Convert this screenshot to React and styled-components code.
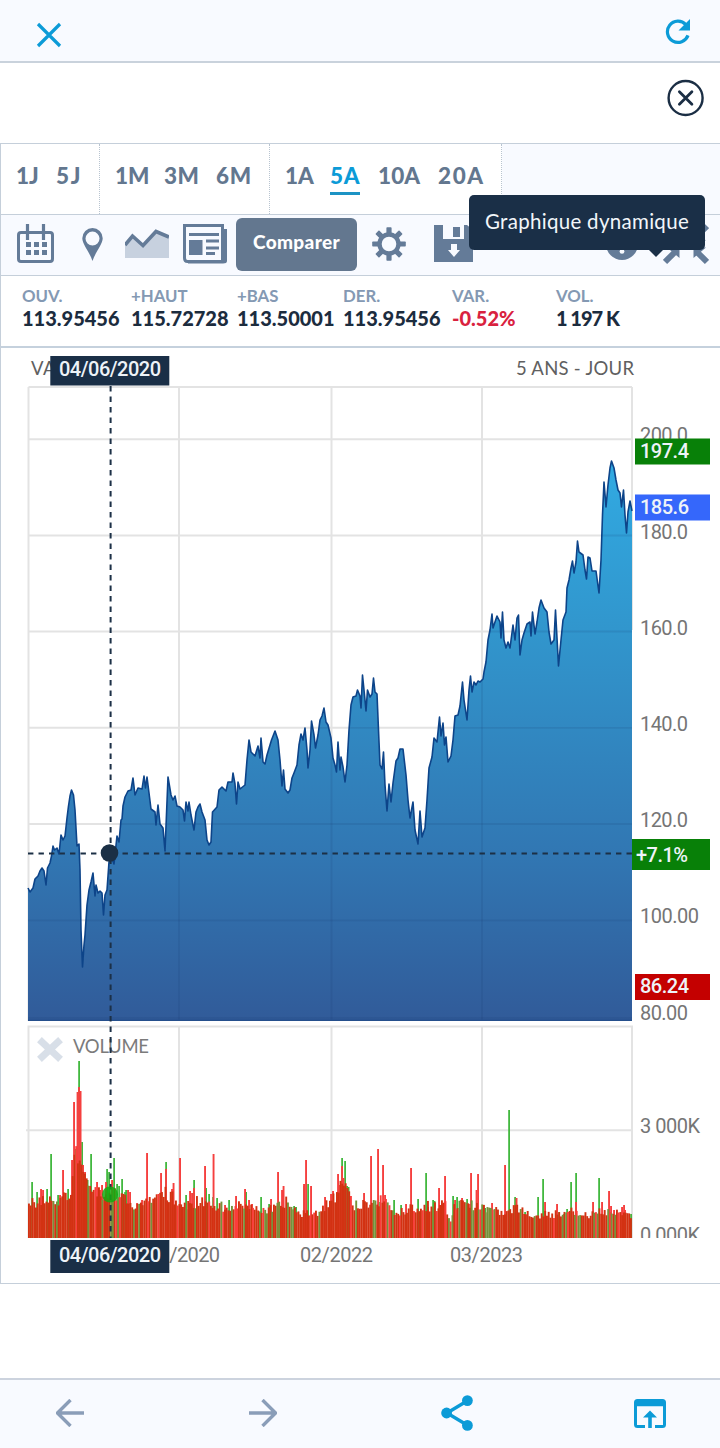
import React from "react";
import styled, { createGlobalStyle, css } from "styled-components";

const RANGES = [
  { width: 99, pad: 15, items: [["1J", 40], ["5J", 30, 1.6]] },
  { width: 170, pad: 15, items: [["1M", 49], ["3M", 52, 0.4], ["6M", 40, 0.8]] },
  { width: 232, pad: 15, items: [["1A", 45], ["5A", 48, 0.7], ["10A", 60, 0.1], ["20A", 50, 1.6]] },
];

const STATS = [
  { label: "OUV.", value: "113.95456" },
  { label: "+HAUT", value: "115.72728" },
  { label: "+BAS", value: "113.50001" },
  { label: "DER.", value: "113.95456" },
  { label: "VAR.", value: "-0.52%", down: true },
  { label: "VOL.", value: "1 197 K", spacing: -1 },
];

// price curve, [x, y]
const PRICE = [
  28,888, 30,892, 33,888, 35,879, 38,876, 40,871, 42,868, 44,871, 46,885, 47.5,868, 50,863, 51.5,856, 53,846,
  54.5,850, 57,848, 59,854, 61,835, 63,840, 65,836, 67,818, 68.5,806, 70,796, 71.5,790, 73.5,795, 75,810, 77,846,
  79,844, 80,870, 81,930, 82.5,967, 84,945, 85,935, 87,905, 89,890, 91,882, 93,873, 95,896, 96,885, 98,893, 100,891,
  102,893, 103.5,915, 105,895, 107,890, 109,862, 112,858, 114,864, 117,836, 119,842, 121,820, 122,819, 123,806,
  125,797, 128,791, 131,790, 133,778, 135,795, 138,788, 142,789, 144,776, 145.5,788, 147,777, 149,793, 151,809,
  155,812, 156,825, 158,805, 160,824, 163,828, 165,851, 168,777, 171,795, 173,800, 175,796, 177,806, 180,807,
  183,810, 184.5,821, 186,802, 188,811, 189,802, 191,815, 194,830, 196,812, 198,807, 200,804, 202,812, 205,820,
  207,840, 209,845, 211,842, 212.5,812, 217,807, 219,790, 222,787, 226,791, 228,782, 232,782, 233,773, 235,784,
  236.5,804, 238,782, 240,789, 245,785, 247,760, 249,740, 251,752, 255,756, 258,746, 260,758, 261,738, 263,762,
  265,764, 267,755, 270,745, 271.5,740, 275,731, 278,740, 280,760, 282,786, 283.5,770, 285,789, 288,793, 290,790,
  292,778, 294,773, 297,765, 299,745, 301,734, 303,740, 305,728, 307,750, 308,768, 310,750, 311.5,721, 314,735,
  315.5,748, 318,735, 320,720, 322,716, 324,708, 326,722, 328,725, 331,738, 333,758, 335,765, 336.5,772, 338,742,
  340,770, 341,757, 343,767, 345,782, 347,765, 349,730, 351,705, 353,697, 356,696, 357.5,690, 360,696, 361,708,
  362.5,675, 365,700, 366,711, 367.5,690, 370,697, 372,694, 373.5,678, 375,692, 377,694, 378.5,730, 380,765,
  382,769, 383.5,752, 385,785, 387,811, 389,784, 391,802, 393,783, 396,761, 398,758, 400,749, 403,749, 406,775,
  408,800, 410,818, 413,802, 415,830, 418,844, 420,811, 422,837, 425,828, 427,800, 429,768, 432,757, 434,738,
  437,742, 439.5,717, 441,736, 443,723, 444.5,745, 446,737, 448,762, 451,756, 453,740, 455,716, 458,715, 460,706,
  462.5,682, 464,700, 467,720, 469,690, 470.5,676, 472,692, 474,682, 476,685, 478,681, 480,682, 483,679, 484,672,
  486,662, 488,640, 490,630, 492,614, 493,628, 495,622, 497,616, 500,622, 501,638, 502.5,612, 504,640, 506,648,
  508,642, 510,648, 513,625, 515,640, 517,618, 518.5,615, 520,655, 522,640, 524,633, 527,624, 530,622, 531,636,
  532.5,612, 535,634, 537,622, 539,608, 541,600, 544,608, 547,612, 549,632, 551,644, 554,640, 555.5,610, 557,638,
  558.5,666, 561,640, 563,620, 566,612, 567,588, 569,580, 571,568, 572.5,561, 574,573, 576,562, 577.5,541,
  579,552, 583,555, 585,570, 586.5,579, 588,557, 590,558, 592,571, 596,571, 599,593, 601,560, 602.5,515, 604,482,
  606,507, 608,485, 610,468, 611.5,461, 614,468, 616,480, 618,490, 620,493, 621.5,507, 623.5,490, 625,515,
  626.5,533, 628,512, 630,501, 632,511,
];

const pairs = (list) => {
  const out = [];
  for (let i = 0; i < list.length; i += 2) out.push([list[i], list[i + 1]]);
  return out;
};

const linePath = "M" + pairs(PRICE).map((p) => p.join(" ")).join("L");
const areaPath = `${linePath}L632 1021L28 1021Z`;

const UP_PEAKS = pairs([
  32,1182, 37,1192, 47,1189, 51,1154, 58,1195, 68,1189, 75,1149, 79,1061, 82,1142, 87.5,1180, 91,1154, 107,1169,
  109,1172, 114,1158, 117,1184, 119,1186, 122,1179, 125,1192, 126,1190, 166,1162, 186,1195, 194,1180, 206,1188,
  209,1194, 213,1197, 217,1198, 229,1200, 246,1192, 261,1197, 269,1204, 304,1186, 308,1184, 294,1206, 296,1207,
  342,1158, 345,1161, 347,1186, 348.5,1187, 350,1201, 380,1202, 394,1200, 401,1205, 418,1199, 426,1173, 433,1200,
  434.5,1201, 453,1196, 457,1197, 467,1199, 482,1209, 485,1208, 509,1110, 515,1197, 525,1212, 538,1197, 543,1179,
  559,1212, 564,1214, 567,1209, 571,1182, 576,1173, 599,1178, 610,1212, 631,1214,
]);

const DOWN_PEAKS = pairs([
  41,1189, 43,1190, 60,1195, 63,1170, 72,1160, 74,1102, 77.5,1092, 79,1087, 80.5,1091, 83,1165, 85,1172, 97,1182,
  100,1190, 102,1185, 106,1182, 112,1180, 128,1190, 130,1192, 137,1203, 142,1200, 147,1153, 161,1173, 166,1169,
  172,1189, 173.5,1183, 180,1158, 190,1191, 192,1193, 194,1188, 205,1166, 213.5,1154, 225,1205, 236,1196,
  245,1189, 249,1200, 252,1204, 271,1199, 278,1172, 282,1190, 283.5,1186, 304,1184, 306,1160, 311,1186, 325,1197,
  331,1194, 333,1191, 338,1174, 340,1185, 342,1166, 343.5,1178, 364,1193, 371,1156, 378,1149, 383,1165, 385,1195,
  406,1204, 411,1168, 428,1207, 439,1188, 441,1205, 443,1204, 445,1176, 455,1200, 462,1198, 470,1204, 471,1173,
  476.5,1190, 478,1174, 492,1203, 505,1165, 516.5,1198, 545,1202, 557,1204, 576,1202, 593,1202, 602,1202, 609,1191,
  611,1206, 614,1210, 622,1207, 624,1205, 625,1210,
]);

// typical height of the daily bars along the axis
const LEVELS = [[28, 33], [60, 38], [70, 45], [75, 80], [83, 70], [90, 46], [125, 39], [135, 28], [165, 43], [182, 31], [200, 36], [225, 29], [250, 33], [265, 25], [285, 35], [297, 23], [318, 25], [335, 40], [344, 58], [352, 32], [380, 37], [396, 25], [420, 30], [445, 32], [449, 16], [453, 31], [475, 32], [500, 24], [515, 28], [532, 21], [570, 25], [590, 21], [600, 27], [632, 20]];

const levelAt = (x) => {
  let i = 1;
  while (i < LEVELS.length - 1 && LEVELS[i][0] < x) i += 1;
  const [x0, h0] = LEVELS[i - 1];
  const [x1, h1] = LEVELS[i];
  return h0 + ((h1 - h0) * (x - x0)) / (x1 - x0);
};

const noise = (n) => {
  const v = Math.sin(n * 91.7 + 13.1) * 4371.3;
  return v - Math.floor(v);
};

const DAILY = Array.from({ length: 345 }, (_, i) => {
  const x = 28 + i * 1.75;
  const greenZone = (x > 110 && x < 126) || (x > 480 && x < 496) || (x > 556 && x < 580);
  const n = noise(i + 400);
  const kind = n < (greenZone ? 0.42 : 0.13) ? "up" : n > 0.88 ? "down" : "mixed";
  return { x, h: levelAt(x) * (0.86 + noise(i) * 0.36), kind };
});

const BAR_FILL = { up: "#76913a", down: "#fb3d3b", mixed: "#d23212" };

const CloseIcon = () => (
  <svg width="26" height="26" viewBox="0 0 26 26" fill="none" stroke="#0c9bd7" strokeWidth="3.2">
    <path d="M2 2L24 24M24 2L2 24" />
  </svg>
);

const ReloadIcon = () => (
  <svg width="26" height="26" viewBox="0 0 26 26">
    <path d="M23 16.4A10.6 10.6 0 1 1 20.8 5.6" fill="none" stroke="#0c9bd7" strokeWidth="3.2" />
    <path d="M25 0V11.5H13.5Z" fill="#0c9bd7" />
  </svg>
);

const CircleCloseIcon = () => (
  <svg width="38" height="38" viewBox="0 0 38 38" fill="none" stroke="#1b2e44">
    <circle cx="18.6" cy="19" r="17" strokeWidth="2.4" />
    <path d="M12.4 12.7L24.9 25.2M24.9 12.7L12.4 25.2" strokeWidth="2.8" strokeLinecap="round" />
  </svg>
);

const CalendarIcon = () => (
  <svg width="37" height="40" viewBox="0 0 37 40">
    <rect x="1.5" y="8.5" width="34" height="29" rx="2.5" fill="none" stroke="#647b98" strokeWidth="3" />
    <path d="M10.5 0V16M26.5 0V16" stroke="#647b98" strokeWidth="3.2" />
    {[9, 17, 25].map((x) =>
      [18, 26].map((y) => <rect key={`${x}-${y}`} x={x} y={y} width="5" height="5" fill="#647b98" />)
    )}
  </svg>
);

const PinIcon = () => (
  <svg width="21" height="33" viewBox="0 0 21 33">
    <path
      d="M10.5 0A10.2 10.2 0 0 0 .3 10.2C.3 16 7 23 10.5 33C14 23 20.7 16 20.7 10.2A10.2 10.2 0 0 0 10.5 0ZM10.5 3.6A7 7 0 1 1 10.5 17.6A7 7 0 1 1 10.5 3.6Z"
      fill="#647b98"
      fillRule="evenodd"
    />
  </svg>
);

const AreaIcon = () => (
  <svg width="44" height="30" viewBox="0 0 44 30">
    <path d="M0 15L8 6.5L18 16L31 3L44 8V29H0Z" fill="#c7d1df" />
    <path d="M0 16L7.5 7L18 16.5L31 2.5L44 8" fill="none" stroke="#647b98" strokeWidth="3.6" />
  </svg>
);

const NewsIcon = () => (
  <svg width="44" height="40" viewBox="0 0 44 40">
    <path d="M39 5H44V37Q44 39.5 40 39.5H5V37H39Z" fill="#647b98" />
    <path d="M1.5 1.5H39.5V37.5H4.5Q1.5 37.5 1.5 34Z" fill="#f8faff" stroke="#647b98" strokeWidth="3" />
    <path d="M6 10.5H36M23 17H36M23 24H36M23 29.5H32" stroke="#647b98" strokeWidth="3" />
    <rect x="6" y="16" width="13.5" height="15" fill="#647b98" />
  </svg>
);

const GearIcon = () => (
  <svg width="34" height="34" viewBox="-17 -17 34 34">
    {[0, 45, 90, 135, 180, 225, 270, 315].map((a) => (
      <rect key={a} x="-2.6" y="-16.8" width="5.2" height="8" rx=".8" fill="#647b98" transform={`rotate(${a})`} />
    ))}
    <circle r="9.5" fill="none" stroke="#647b98" strokeWidth="4.4" />
  </svg>
);

const SaveIcon = () => (
  <svg width="39" height="38" viewBox="0 0 39 38">
    <path d="M0 0H9V14H30V0H33L39 5V37H0Z" fill="#647b98" />
    <rect x="19" y="2" width="7" height="10" fill="#647b98" />
    <path d="M17 19H23V25H26L20 32L14 25H17Z" fill="#f8faff" />
  </svg>
);

const InfoIcon = () => (
  <svg width="32" height="32" viewBox="0 0 32 32">
    <circle cx="16" cy="16" r="16" fill="#647b98" />
    <path d="M11 10Q12 6 16 6Q21 6 21 11Q21 14 16 17" fill="none" stroke="#f8faff" strokeWidth="3" />
    <circle cx="16" cy="23.4" r="2.4" fill="#f8faff" />
  </svg>
);

const ShrinkIcon = () => (
  <svg width="46" height="42" viewBox="0 0 46 42">
    <g fill="none" stroke="#647b98" strokeWidth="6">
      <path d="M2 39L13 28M44 39L33 28M2 3L13 14M44 3L33 14" />
    </g>
    <path d="M4 24.5H16.5V35ZM43 24.5H30.5V35ZM4 17.5H16.5V7ZM43 17.5H30.5V7Z" fill="#647b98" />
  </svg>
);

const ArrowIcon = ({ flip }) => (
  <svg width="28" height="28" viewBox="0 0 28 28" fill="none" stroke="#8a9db8" strokeWidth="3.4">
    <path d={flip ? "M0 14H26M13.5 1L26.5 14L13.5 27" : "M28 14H2M14.5 1L1.5 14L14.5 27"} />
  </svg>
);

const ShareIcon = () => (
  <svg width="32" height="36" viewBox="0 0 32 36">
    <path d="M26 6L6 18L26 30" fill="none" stroke="#0c9bd7" strokeWidth="3.4" />
    <circle cx="26.4" cy="5.6" r="5.4" fill="#0c9bd7" />
    <circle cx="5.6" cy="18" r="5.4" fill="#0c9bd7" />
    <circle cx="26.4" cy="30.4" r="5.4" fill="#0c9bd7" />
  </svg>
);

const OpenIcon = () => (
  <svg width="32" height="29" viewBox="0 0 32 29" fill="#0c9bd7">
    <path d="M3.5 0H28.5Q32 0 32 3.5V25.5Q32 29 28.5 29H21V26H29V7.2H3V26H11V29H3.5Q0 29 0 25.5V3.5Q0 0 3.5 0Z" />
    <path d="M16 11.5L23 18.5H17.8V29H14.2V18.5H9Z" />
  </svg>
);

const Tag = ({ x, y, w, h, fill, tx, ty, children, fit }) => (
  <g>
    <rect x={x} y={y} width={w} height={h} fill={fill} />
    <ChartText x={tx} y={ty} $color="#eef3f8" $strong textLength={fit}>
      {children}
    </ChartText>
  </g>
);

const StockChart = () => (
  <ChartSvg viewBox="1 348 719 935">
    <defs>
      <linearGradient id="priceFill" gradientUnits="userSpaceOnUse" x1="0" y1="461" x2="0" y2="1021">
        <stop offset="0" stopColor="#31aae2" />
        <stop offset=".3" stopColor="#3196cd" />
        <stop offset=".7" stopColor="#3177b3" />
        <stop offset="1" stopColor="#315b99" />
      </linearGradient>
      <clipPath id="priceClip">
        <path d={areaPath} />
      </clipPath>
      <clipPath id="volumeClip">
        <rect x="0" y="1026" width="720" height="212" />
      </clipPath>
    </defs>

    <Label x="31" y="375" textLength="46">VALE</Label>
    <Label x="516" y="375" textLength="118">5 ANS - JOUR</Label>

    <Grid>
      <path d="M28.5 387H632M28.5 387V1021M632 387V630M179 387V1021M331.5 387V1021M482 387V1021" />
      <path d="M28 439.3H632M28 535.5H632M28 631.5H632M28 727.8H632M28 824H632M28 920.3H632" />
      <path d="M28.5 1238V1026.5H632V1238M179 1026V1238M331.5 1026V1238M482 1026V1238M26 1130.3H632" />
    </Grid>
    <path d={areaPath} fill="url(#priceFill)" />
    <g clipPath="url(#priceClip)" fill="none" stroke="#14356b" strokeOpacity=".13" strokeWidth="1.8">
      <path d="M179 387V1021M331.5 387V1021M482 387V1021" />
      <path d="M28 535.5H632M28 631.5H632M28 727.8H632M28 824H632M28 920.3H632M28 1018H632" />
    </g>
    <path d={linePath} fill="none" stroke="#0d4489" strokeWidth="1.6" strokeLinejoin="round" />
    <path d="M28 1020.3H632" stroke="#254f8c" strokeWidth="1.4" />

    <ChartText x="640" y="441.5" textLength="48">200.0</ChartText>
    <ChartText x="640" y="538.5" textLength="48">180.0</ChartText>
    <ChartText x="640" y="634.5" textLength="48">160.0</ChartText>
    <ChartText x="640" y="730.5" textLength="48">140.0</ChartText>
    <ChartText x="640" y="826.5" textLength="48">120.0</ChartText>
    <ChartText x="640" y="922.5" textLength="59">100.00</ChartText>
    <ChartText x="640" y="1019.5" textLength="48">80.00</ChartText>

    <path d="M42 1042L58 1057M58 1042L42 1057" stroke="#d8dfe8" strokeWidth="7" strokeLinecap="square" />
    <Label x="73" y="1053" textLength="76" $soft>VOLUME</Label>

    {UP_PEAKS.map(([x, y]) => (
      <rect key={`u${x}`} x={x - 0.8} y={y} width="1.8" height={1238 - y} fill="#42b83f" />
    ))}
    {DOWN_PEAKS.map(([x, y]) => (
      <rect key={`d${x}`} x={x - 0.9} y={y} width="1.9" height={1238 - y} fill="#f5403f" />
    ))}
    {DAILY.map((b) => (
      <rect key={b.x} x={b.x} y={1238 - b.h} width={b.x > 630 ? 1.5 : 1.9} height={b.h} fill={BAR_FILL[b.kind]} />
    ))}

    <g clipPath="url(#volumeClip)">
      <ChartText x="640" y="1132.5" textLength="60">3 000K</ChartText>
      <ChartText x="640" y="1241.5" textLength="60">0 000K</ChartText>
    </g>

    <ChartText x="148" y="1262" textLength="72">11/2020</ChartText>
    <ChartText x="300" y="1262" textLength="73">02/2022</ChartText>
    <ChartText x="450" y="1262" textLength="73">03/2023</ChartText>

    <path d="M110.6 386V1238" stroke="#1c3046" strokeWidth="2" strokeDasharray="5.4 5.1" />
    <path d="M28 853.5H632" stroke="#1c3046" strokeWidth="1.8" strokeDasharray="5.4 5.1" />
    <circle cx="109.5" cy="853" r="8.8" fill="#1a2f45" />
    <circle cx="110" cy="1194.5" r="8" fill="#10ab10" opacity=".85" />

    <Tag x={635} y={438.5} w={75} h={26} fill="#088008" tx={640} ty={457.5} fit={49}>197.4</Tag>
    <Tag x={635} y={494.5} w={75} h={26} fill="#3567fb" tx={640} ty={513.5} fit={49}>185.6</Tag>
    <Tag x={632} y={839} w={78} h={31} fill="#088008" tx={636} ty={861.5} fit={52}>+7.1%</Tag>
    <Tag x={635} y={974} w={75} h={26} fill="#c40000" tx={640} ty={993} fit={49}>86.24</Tag>
    <Tag x={50.3} y={356} w={119} h={29.5} fill="#1a2f47" tx={59} ty={375.5} fit={102}>04/06/2020</Tag>
    <Tag x={50.3} y={1240} w={119} h={33} fill="#1a2f47" tx={59} ty={1262} fit={102}>04/06/2020</Tag>
  </ChartSvg>
);

const App = () => {
  return (
    <Page>
      <GlobalStyle />
      <TopBar>
        <CloseIcon />
        <ReloadIcon />
      </TopBar>
      <DismissRow>
        <CircleCloseIcon />
      </DismissRow>
      <Panel>
        <RangeRow>
          {RANGES.map((group) => (
            <RangeGroup key={group.width} $width={group.width} $pad={group.pad}>
              {group.items.map(([name, width, spacing]) => (
                <RangeItem key={name} $width={width}>
                  <RangeName $active={name === "5A"} $spacing={spacing}>{name}</RangeName>
                </RangeItem>
              ))}
            </RangeGroup>
          ))}
        </RangeRow>
        <Tools>
          <Tool $left={16}><CalendarIcon /></Tool>
          <Tool $left={28}><PinIcon /></Tool>
          <Tool $left={22}><AreaIcon /></Tool>
          <Tool $left={14}><NewsIcon /></Tool>
          <CompareButton>Comparer</CompareButton>
          <Tool $left={15}><GearIcon /></Tool>
          <Tool $left={28}><SaveIcon /></Tool>
          <Tool $left={133}><InfoIcon /></Tool>
          <Tool $left={25}><ShrinkIcon /></Tool>
          <Tooltip>Graphique dynamique</Tooltip>
        </Tools>
        <Stats>
          {STATS.map((s) => (
            <Stat key={s.label}>
              <StatLabel>{s.label}</StatLabel>
              <StatValue $down={s.down} $spacing={s.spacing}>{s.value}</StatValue>
            </Stat>
          ))}
        </Stats>
        <StockChart />
      </Panel>
      <BottomBar>
        <NavItem><ArrowIcon /></NavItem>
        <NavItem><ArrowIcon flip /></NavItem>
        <NavItem><ShareIcon /></NavItem>
        <NavItem><OpenIcon /></NavItem>
      </BottomBar>
    </Page>
  );
};

const GlobalStyle = createGlobalStyle`
  * {
    box-sizing: border-box;
  }

  body {
    margin: 0;
    background: #fff;
    font-family: Lato, "Open Sans", sans-serif;
  }

  svg {
    display: block;
    flex: none;
  }
`;

const Page = styled.div`
  width: 720px;
  height: 1448px;
  display: flex;
  flex-direction: column;
  overflow: hidden;
`;

const TopBar = styled.header`
  height: 63px;
  display: flex;
  justify-content: space-between;
  padding: 22px 29px 0 36px;
  background: #f8faff;
  border-bottom: 2px solid #c9d2dc;

  svg:last-child {
    margin-top: -3px;
  }
`;

const DismissRow = styled.div`
  height: 80px;
  display: flex;
  justify-content: flex-end;
  padding: 16px 15px 0;
`;

const Panel = styled.main`
  height: 1141px;
  border: 1px solid #c5cfda;
  border-right: 0;
`;

const RangeRow = styled.div`
  height: 71px;
  display: flex;
  background: #f8faff;
  border-bottom: 1px solid #c5cfda;
`;

const RangeGroup = styled.div`
  width: ${(p) => p.$width}px;
  display: flex;
  padding: 18px 0 0 ${(p) => p.$pad}px;
  background: #fff;
  border-right: 1px dotted #b8c4d0;
`;

const RangeItem = styled.div`
  width: ${(p) => p.$width}px;
`;

const RangeName = styled.span`
  display: inline-block;
  height: 33px;
  font-size: 22.5px;
  line-height: 27px;
  font-weight: 900;
  letter-spacing: ${(p) => p.$spacing || 0}px;
  color: #63778f;
  white-space: nowrap;

  ${(p) =>
    p.$active &&
    css`
      color: #0c9bd7;
      border-bottom: 3px solid #1c93c4;
    `}
`;

const Tools = styled.div`
  height: 61px;
  display: flex;
  align-items: center;
  position: relative;
  padding-bottom: 2px;
  background: #f8faff;
  border-bottom: 1px solid #c5cfda;
`;

const Tool = styled.div`
  margin-left: ${(p) => p.$left}px;
`;

const CompareButton = styled.button`
  width: 121px;
  height: 53px;
  margin-left: 9px;
  padding: 0 0 6px;
  border: 0;
  border-radius: 6px;
  background: #63778f;
  color: #fff;
  font: 900 19px Lato, sans-serif;
  letter-spacing: 0.35px;
`;

const Tooltip = styled.div`
  position: absolute;
  left: 468px;
  top: -20px;
  width: 236px;
  height: 55px;
  border-radius: 5px;
  background: #1a2f47;
  color: #f2f6fa;
  font-size: 20.5px;
  letter-spacing: 0.3px;
  line-height: 52px;
  text-align: center;
  white-space: nowrap;

  &::after {
    content: "";
    position: absolute;
    left: 180px;
    top: 55px;
    border: 7px solid transparent;
    border-top-color: #1a2f47;
    border-bottom: 0;
  }
`;

const Stats = styled.div`
  height: 72px;
  display: grid;
  grid-template-columns: 109px 106px 106px 109px 104px 1fr;
  padding: 9px 0 0 21px;
  border-bottom: 2px solid #c5d1dd;
`;

const Stat = styled.div`
  white-space: nowrap;
`;

const StatLabel = styled.div`
  font-size: 16.8px;
  line-height: 22px;
  font-weight: 700;
  color: #8499b3;
`;

const StatValue = styled.div`
  font-size: 20px;
  line-height: 23px;
  font-weight: 900;
  letter-spacing: ${(p) => p.$spacing || 0}px;
  color: ${(p) => (p.$down ? "#d9223f" : "#1c2c3e")};
`;

const ChartSvg = styled.svg`
  width: 719px;
  height: 935px;
`;

const Grid = styled.g`
  fill: none;
  stroke: #e3e3e3;
  stroke-width: 2;
`;

const ChartText = styled.text`
  font-family: Roboto, sans-serif;
  font-size: 20px;
  font-weight: ${(p) => (p.$strong ? 500 : 400)};
  fill: ${(p) => p.$color || "#757575"};
`;

const Label = styled.text`
  font-family: Lato, sans-serif;
  font-size: 18.5px;
  fill: ${(p) => (p.$soft ? "#7b7b7b" : "#606060")};
`;

const BottomBar = styled.footer`
  height: 70px;
  margin-top: auto;
  display: grid;
  grid-template-columns: repeat(4, 193.3px);
  align-items: center;
  justify-content: center;
  padding-bottom: 2px;
  background: #f8faff;
  border-top: 2px solid #ccd3de;
`;

const NavItem = styled.div`
  display: flex;
  justify-content: center;
`;

export default App;
